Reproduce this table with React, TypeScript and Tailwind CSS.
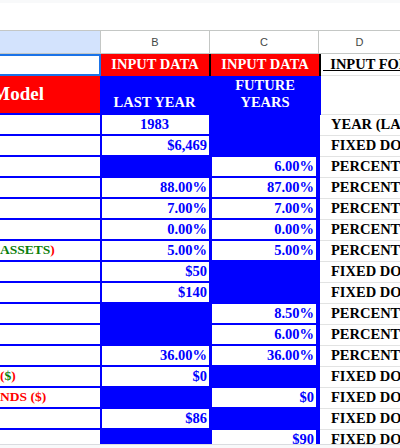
import React from "react";

type Row = {
  a?: React.ReactNode;
  b: string | null;
  c: string | null;
  d: string;
  center?: boolean;
};

const serif = "font-['Liberation_Serif','Times_New_Roman',serif] font-bold";

const rows: Row[] = [
  { b: "1983", c: null, d: "YEAR (LAST YEAR)", center: true },
  { b: "$6,469", c: null, d: "FIXED DOLLARS" },
  { b: null, c: "6.00%", d: "PERCENT" },
  { b: "88.00%", c: "87.00%", d: "PERCENT" },
  { b: "7.00%", c: "7.00%", d: "PERCENT" },
  { b: "0.00%", c: "0.00%", d: "PERCENT" },
  {
    a: (
      <span className="text-[#0a7d0a]">
        ASSETS<span className="text-[#ff0000]">)</span>
      </span>
    ),
    b: "5.00%",
    c: "5.00%",
    d: "PERCENT",
  },
  { b: "$50", c: null, d: "FIXED DOLLARS" },
  { b: "$140", c: null, d: "FIXED DOLLARS" },
  { b: null, c: "8.50%", d: "PERCENT" },
  { b: null, c: "6.00%", d: "PERCENT" },
  { b: "36.00%", c: "36.00%", d: "PERCENT" },
  {
    a: (
      <span className="text-[#ff0000]">
        (<span className="text-[#0a7d0a]">$</span>)
      </span>
    ),
    b: "$0",
    c: null,
    d: "FIXED DOLLARS",
  },
  { a: <span className="text-[#ff0000]">NDS ($)</span>, b: null, c: "$0", d: "FIXED DOLLARS" },
  { b: "$86", c: null, d: "FIXED DOLLARS" },
  { b: null, c: "$90", d: "FIXED DOLLARS" },
];

const ValueCell = ({ value, width, center }: { value: string | null; width: string; center?: boolean }) => {
  if (value === null) return <div className={`${width} h-[19px]`} />;
  return (
    <div
      className={`${width} h-[19px] bg-white flex items-center pr-[2px] text-[14.5px] leading-none text-[#0000ff] ${serif} ${
        center ? "justify-center" : "justify-end"
      }`}
    >
      {value}
    </div>
  );
};

const DataRow = ({ row }: { row: Row }) => (
  <div className="flex h-[21px] shrink-0">
    <div
      className={`w-[100px] h-full bg-white border-b-2 border-[#0000ff] overflow-hidden whitespace-nowrap flex items-center text-[13.5px] ${serif}`}
    >
      {row.a}
    </div>
    <div className="w-[220px] h-full bg-[#0000ff] flex gap-[3px] pl-[2px] pr-[4px] pb-[2px]">
      <ValueCell value={row.b} width="w-[107px]" center={row.center} />
      <ValueCell value={row.c} width="w-[104px]" />
    </div>
    <div
      className={`flex-1 h-full border-b border-[#e2e3e3] pl-[11px] flex items-center overflow-hidden whitespace-nowrap text-[14.5px] text-black ${serif}`}
    >
      {row.d}
    </div>
  </div>
);

export default function App() {
  return (
    <div className="w-[400px] h-[448px] bg-white flex flex-col overflow-hidden">
      {/* formula bar edge */}
      <div className="h-[3px] bg-[#f8f9fa] shrink-0" />
      <div className="h-[27px] shrink-0" />

      {/* column headers */}
      <div className="flex h-[24px] shrink-0 border-y border-[#c4c7c5] font-['Liberation_Sans',Arial,sans-serif] text-[11px] text-[#444746]">
        <div className="w-[101px] bg-[#d3e3fd] border-r border-[#c4c7c5]" />
        <div className="w-[109px] border-r border-[#c4c7c5] flex items-center justify-center">B</div>
        <div className="w-[109px] border-r border-[#c4c7c5] flex items-center justify-center">C</div>
        <div className="flex-1 flex items-center justify-center">D</div>
      </div>

      {/* row 1 */}
      <div className="flex h-[22px] shrink-0">
        <div className="w-[101px] border-2 border-l-0 border-[#1a73e8] bg-white" />
        <div className={`w-[108px] bg-[#ff0000] flex items-center justify-center text-[14.5px] text-white ${serif}`}>
          INPUT DATA
        </div>
        <div
          className={`w-[112px] bg-[#ff0000] border-x-2 border-black flex items-center justify-center text-[14.5px] text-white ${serif}`}
        >
          INPUT DATA
        </div>
        <div
          className={`flex-1 border-b border-[#e2e3e3] pl-[2px] flex items-center overflow-hidden whitespace-pre text-[14.5px] text-black underline ${serif}`}
        >
          {"  INPUT FORMULAS"}
        </div>
      </div>

      {/* row 2 */}
      <div className="flex h-[39px] shrink-0">
        <div
          className={`w-[100px] bg-[#ff0000] border-b-2 border-[#0000ff] overflow-hidden whitespace-nowrap flex items-center justify-end pr-[56px] text-[19px] text-white ${serif}`}
        >
          Model
        </div>
        <div className={`w-[221px] bg-[#0000ff] flex items-end pb-[4px] text-[14.5px] leading-[17px] text-white ${serif}`}>
          <div className="w-[109px] text-center">LAST YEAR</div>
          <div className="w-[112px] text-center">
            FUTURE
            <br />
            YEARS
          </div>
        </div>
        <div className="flex-1 border-b border-[#e2e3e3]" />
      </div>

      {/* data rows */}
      <div className="flex-1 flex flex-col overflow-hidden">
        {rows.map((row, i) => (
          <DataRow key={i} row={row} />
        ))}
      </div>

      <div className="h-[4px] shrink-0 border-t border-[#dadce0] bg-[#f8f9fa]" />
    </div>
  );
}
